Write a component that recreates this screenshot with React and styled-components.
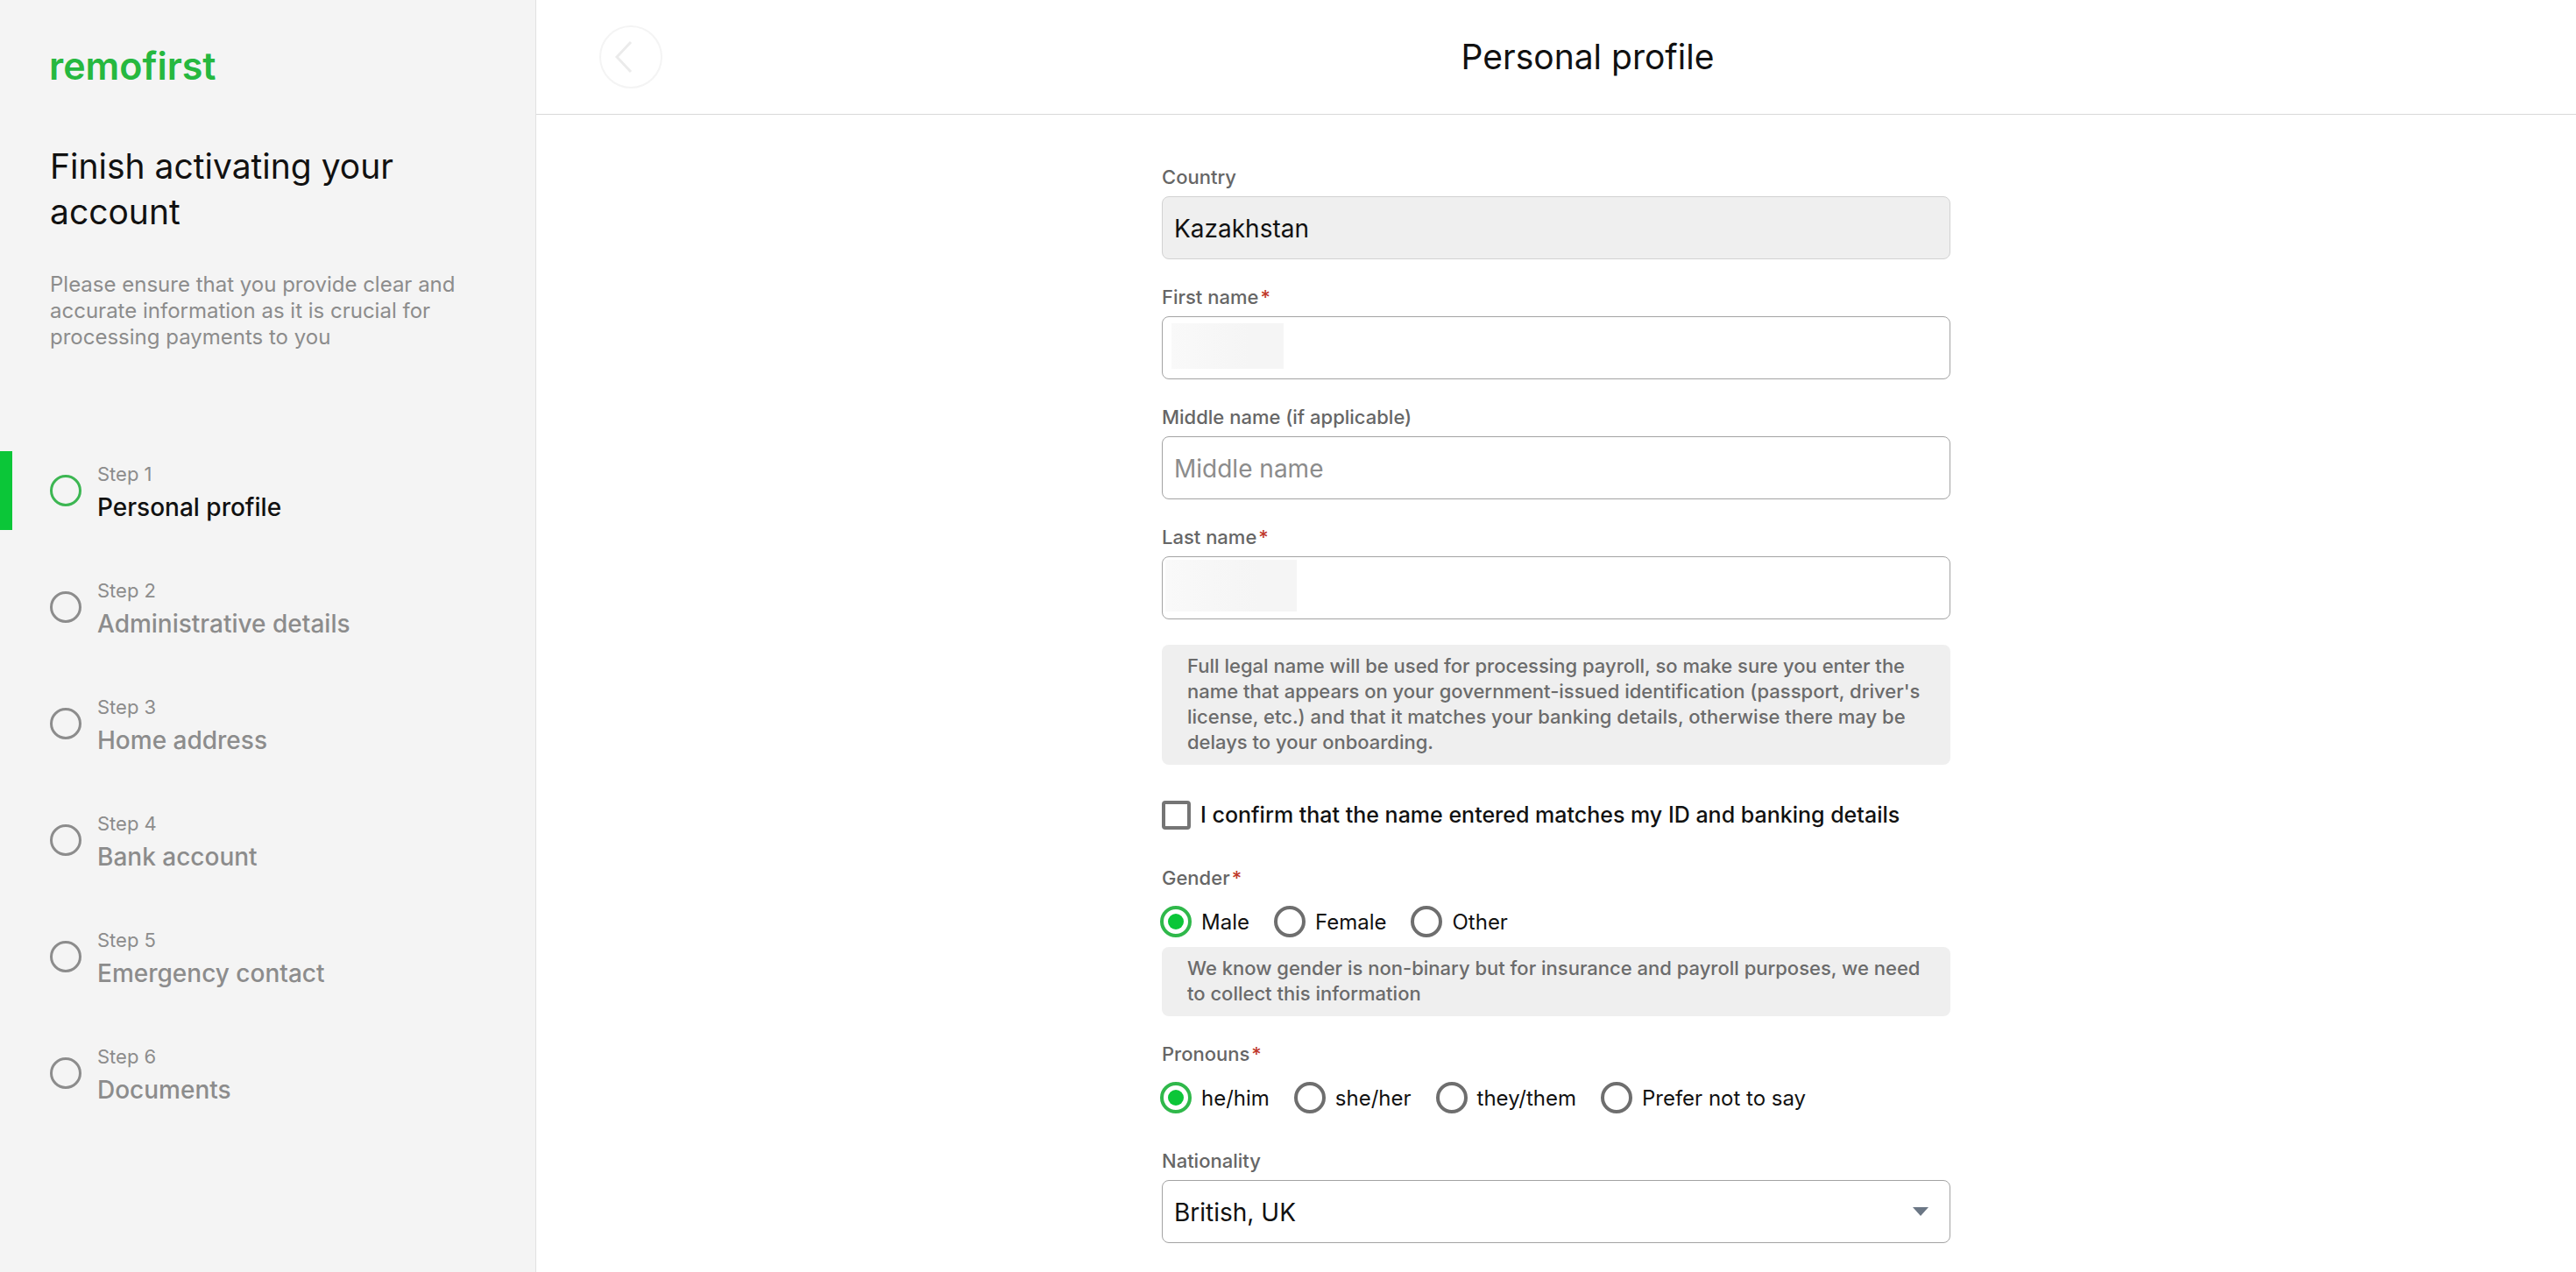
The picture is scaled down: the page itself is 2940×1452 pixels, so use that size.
import React from "react";
import styled, { createGlobalStyle } from "styled-components";

const steps = [
    "Personal profile",
    "Administrative details",
    "Home address",
    "Bank account",
    "Emergency contact",
    "Documents",
];

const genders = ["Male", "Female", "Other"];
const pronouns = ["he/him", "she/her", "they/them", "Prefer not to say"];

function Steps({ current }) {
    return (
        <StepList>
            {steps.map((title, index) =>
                <Step key={title} $active={index === current}>
                    <StepCircle $active={index === current} />
                    <div>
                        <StepNumber>Step {index + 1}</StepNumber>
                        <StepTitle $active={index === current}>{title}</StepTitle>
                    </div>
                </Step>
            )}
        </StepList>
    )
}

function TextField({ id, label, required, mask, ...rest }) {
    return (
        <Field>
            <Label htmlFor={id}>{label}{required && <Required>*</Required>}</Label>
            <Control>
                <Input id={id} type="text" {...rest} />
                {mask && <Mask $size={mask} />}
            </Control>
        </Field>
    )
}

function RadioGroup({ name, legend, options, value, onChange }) {
    return (
        <Group>
            <Legend>{legend}<Required>*</Required></Legend>
            <Options>
                {options.map(option =>
                    <Option key={option}>
                        <Radio
                            type="radio"
                            name={name}
                            checked={value === option}
                            onChange={() => onChange(option)}
                        />
                        {option}
                    </Option>
                )}
            </Options>
        </Group>
    )
}

export default function App() {

    const [confirmed, setConfirmed] = React.useState(false);
    const [gender, setGender] = React.useState("Male");
    const [pronoun, setPronoun] = React.useState("he/him");

    return (
        <Page>
            <GlobalStyle />
            <Sidebar>
                <Logo>remofirst</Logo>
                <SidebarTitle>Finish activating your account</SidebarTitle>
                <SidebarText>
                    Please ensure that you provide clear and accurate information as it is crucial for processing payments to you
                </SidebarText>
                <Steps current={0} />
            </Sidebar>
            <Main>
                <Header>
                    <BackButton type="button" aria-label="Back" disabled>
                        <svg width="20" height="38" viewBox="0 0 20 38" fill="none" stroke="#ebebeb" strokeWidth="3">
                            <path d="M18 2 L2 19 L18 36" />
                        </svg>
                    </BackButton>
                    <HeaderTitle>Personal profile</HeaderTitle>
                </Header>
                <Form>
                    <TextField id="country" label="Country" defaultValue="Kazakhstan" disabled />
                    <TextField id="firstName" label="First name" required mask="small" />
                    <TextField id="middleName" label="Middle name (if applicable)" placeholder="Middle name" />
                    <TextField id="lastName" label="Last name" required mask="large" />
                    <Note>
                        Full legal name will be used for processing payroll, so make sure you enter the name that appears on your government-issued identification (passport, driver's license, etc.) and that it matches your banking details, otherwise there may be delays to your onboarding.
                    </Note>
                    <Confirm>
                        <Checkbox
                            type="checkbox"
                            checked={confirmed}
                            onChange={() => setConfirmed(!confirmed)}
                        />
                        I confirm that the name entered matches my ID and banking details
                    </Confirm>
                    <GenderBlock>
                        <RadioGroup name="gender" legend="Gender" options={genders} value={gender} onChange={setGender} />
                        <Note>
                            We know gender is non-binary but for insurance and payroll purposes, we need to collect this information
                        </Note>
                    </GenderBlock>
                    <RadioGroup name="pronouns" legend="Pronouns" options={pronouns} value={pronoun} onChange={setPronoun} />
                    <Nationality>
                        <Label htmlFor="nationality">Nationality</Label>
                        <Control>
                            <Select id="nationality" defaultValue="British, UK">
                                <option>British, UK</option>
                            </Select>
                            <Caret viewBox="0 0 18 10">
                                <path d="M0 0 H18 L9 10 Z" fill="#6b7785" />
                            </Caret>
                        </Control>
                    </Nationality>
                </Form>
            </Main>
        </Page>
    )
}

const GlobalStyle = createGlobalStyle`
    * {
        box-sizing: border-box;
        margin: 0;
    }

    body {
        background: #ffffff;
        color: #111111;
    }

    body, input, select, button {
        font-family: Inter, "Liberation Sans", sans-serif;
    }
`

const Page = styled.div`
    display: flex;
    min-height: 100vh;
`

const Sidebar = styled.aside`
    flex: none;
    width: 612px;
    padding: 48px 0;
    background: #f4f4f4;
    border-right: 1px solid #e2e2e2;
`

const Logo = styled.div`
    padding: 0 56px;
    font-size: 43px;
    font-weight: 600;
    line-height: 54px;
    color: #26b83f;
`

const SidebarTitle = styled.h2`
    margin-top: 62px;
    padding: 0 57px;
    font-size: 39px;
    font-weight: 400;
    line-height: 52px;
`

const SidebarText = styled.p`
    margin-top: 42px;
    padding: 0 57px;
    font-size: 24px;
    line-height: 30px;
    color: #8c8c8c;
`

const StepList = styled.ol`
    display: flex;
    flex-direction: column;
    gap: 43px;
    margin-top: 115px;
    padding: 0;
    list-style: none;
`

const Step = styled.li`
    display: flex;
    align-items: center;
    gap: 18px;
    height: 90px;
    padding-left: 43px;
    border-left: 14px solid ${props => props.$active ? "#0bc638" : "transparent"};
`

const StepCircle = styled.span`
    flex: none;
    width: 36px;
    height: 36px;
    border: 3px solid ${props => props.$active ? "#3cb652" : "#8c8c8c"};
    border-radius: 50%;
`

const StepNumber = styled.div`
    font-size: 22px;
    line-height: 38px;
    color: #8c8c8c;
`

const StepTitle = styled.div`
    font-size: 28px;
    font-weight: 500;
    line-height: 38px;
    color: ${props => props.$active ? "#111111" : "#8c8c8c"};
`

const Main = styled.main`
    flex: 1;
`

const Header = styled.header`
    display: flex;
    align-items: center;
    height: 131px;
    padding: 0 72px;
    border-bottom: 1px solid #d9d9d9;
`

const BackButton = styled.button`
    display: flex;
    align-items: center;
    justify-content: center;
    width: 72px;
    height: 72px;
    padding: 0 16px 0 0;
    background: transparent;
    border: 2px solid #f4f4f4;
    border-radius: 50%;
`

const HeaderTitle = styled.h1`
    flex: 1;
    font-size: 39px;
    font-weight: 400;
    line-height: 52px;
    text-align: center;
`

const Form = styled.form`
    display: flex;
    flex-direction: column;
    gap: 29px;
    width: 900px;
    margin: 0 auto;
    padding: 57px 0 33px;
`

const Field = styled.div`
    display: flex;
    flex-direction: column;
    gap: 7px;
`

const Nationality = styled(Field)`
    margin-top: 11px;
`

const Label = styled.label`
    font-size: 22px;
    font-weight: 500;
    line-height: 29px;
    color: #666666;
`

const Required = styled.span`
    margin-left: 2px;
    color: #c0392b;
`

const Control = styled.div`
    position: relative;
`

const Input = styled.input`
    display: block;
    width: 100%;
    height: 72px;
    padding: 2px 13px 0;
    font-size: 28px;
    color: #111111;
    background: #ffffff;
    border: 1px solid #a3a3a3;
    border-radius: 8px;

    &::placeholder {
        color: #8c8c8c;
        opacity: 1;
    }

    &:disabled {
        color: #111111;
        background: #efefef;
        border-color: #d2d2d2;
    }
`

const Select = styled(Input).attrs({ as: "select" })`
    appearance: none;
`

const Caret = styled.svg`
    position: absolute;
    top: 31px;
    right: 25px;
    width: 18px;
    height: 10px;
    pointer-events: none;
`

// covers the value typed in the field
const Mask = styled.span`
    position: absolute;
    top: ${props => props.$size === "large" ? 4 : 8}px;
    left: ${props => props.$size === "large" ? 4 : 11}px;
    width: ${props => props.$size === "large" ? 150 : 128}px;
    height: ${props => props.$size === "large" ? 59 : 52}px;
    background: linear-gradient(90deg, #f9f9f9, #f5f5f5 70%);
`

const Note = styled.p`
    padding: 10px 29px 11px;
    font-size: 22px;
    font-weight: 500;
    line-height: 29px;
    color: #6b6b6b;
    background: #efefef;
    border-radius: 8px;
`

const Option = styled.label`
    display: flex;
    align-items: center;
    gap: 11px;
    height: 36px;
    font-size: 24px;
`

const Confirm = styled(Option)`
    margin: 10px 0 11px;
    font-size: 25px;
    font-weight: 500;
`

const Checkbox = styled.input`
    appearance: none;
    width: 33px;
    height: 33px;
    margin: 0;
    border: 4px solid #757575;
    border-radius: 4px;

    &:checked {
        background: #0bc638;
    }
`

const GenderBlock = styled.div`
    display: flex;
    flex-direction: column;
    gap: 11px;
`

const Group = styled.fieldset`
    padding: 0;
    border: none;
`

const Legend = styled.legend`
    margin-bottom: 17px;
    padding: 0;
    font-size: 22px;
    font-weight: 500;
    line-height: 29px;
    color: #666666;
`

const Options = styled.div`
    display: flex;
    gap: 30px;
`

const Radio = styled.input`
    appearance: none;
    display: grid;
    place-items: center;
    width: 36px;
    height: 36px;
    margin: 0 0 0 -2px;
    border: 4px solid #6e6e6e;
    border-radius: 50%;

    &:checked {
        border-color: #2fb84a;
    }

    &:checked::after {
        content: "";
        width: 18px;
        height: 18px;
        background: #0bc638;
        border-radius: 50%;
    }
`
